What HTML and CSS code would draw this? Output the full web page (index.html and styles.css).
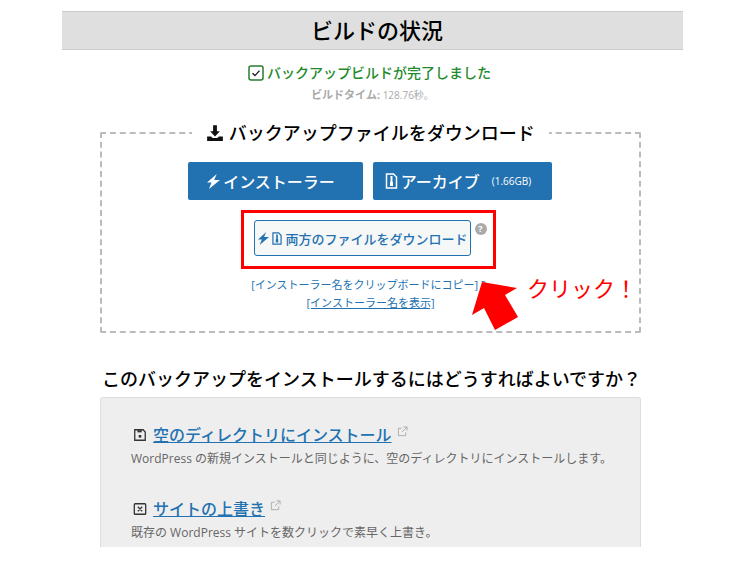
FILE: index.html
```html
<!DOCTYPE html>
<html>

<head>
  <title>ビルドの状況</title>
  <link rel="stylesheet" href="styles.css">
</head>

<body>
  <div class="page">
    <h1 class="page-title">ビルドの状況</h1>

    <div class="status">
      <svg class="status-icon" viewBox="0 0 16 16" width="16" height="16">
        <rect x="1" y="1" width="14" height="14" rx="2" fill="none" stroke="#2a7d2e" stroke-width="1.5" />
        <path d="M4.5 8.2 7 10.6 11.5 5.6" fill="none" stroke="#222" stroke-width="1.4" />
      </svg>
      <span>バックアップビルドが完了しました</span>
    </div>
    <div class="build-time"><b>ビルドタイム:</b> 128.76秒。</div>

    <fieldset class="download-box">
      <legend>
        <svg viewBox="0 0 16 16" width="18" height="18">
          <path d="M6.300 1h3.400v5.500h2.600L8 11 3.700 6.500h2.600z" fill="#111" />
          <path d="M1 11h3.500L6 12.500h4L11.500 11H15v4H1z" fill="#111" />
        </svg>
        バックアップファイルをダウンロード
      </legend>

      <div class="main-buttons">
        <a class="btn btn-installer">
          <svg class="bolt" viewBox="1 1 10 14" width="13" height="15" preserveAspectRatio="none">
            <path d="M8.500 1 1 9h3.500L2.500 15 11 6.500H6.500z" fill="#fff" />
          </svg>
          インストーラー
        </a>
        <a class="btn btn-archive">
          <svg class="zip" viewBox="0 0 12 16" width="13" height="16">
            <path d="M1 1h7l3 3v11H1z" fill="none" stroke="#fff" stroke-width="1.500" />
            <path d="M5 3h2v6H5zM4.500 9h3v4h-3z" fill="#fff" />
          </svg>
          アーカイブ <small>(1.66GB)</small>
        </a>
      </div>

      <div class="both-row">
        <a class="btn-both">
          <svg viewBox="1 1 10 14" width="11" height="13" preserveAspectRatio="none">
            <path d="M8.500 1 1 9h3.500L2.500 15 11 6.500H6.500z" fill="#2271b1" />
          </svg>
          <svg viewBox="0 0 12 16" width="10" height="13">
            <path d="M1 1h7l3 3v11H1z" fill="none" stroke="#2271b1" stroke-width="1.500" />
            <path d="M5 3h2v6H5zM4.500 9h3v4h-3z" fill="#2271b1" />
          </svg>
          両方のファイルをダウンロード
        </a>
        <span class="help">?</span>
      </div>

      <div class="links">
        <div class="copy-row"><a class="copy-link">[インストーラー名をクリップボードにコピー]</a> <span class="help-small">?</span></div>
        <div><a class="show-link">[インストーラー名を表示]</a></div>
      </div>
    </fieldset>

    <h2 class="howto-title">このバックアップをインストールするにはどうすればよいですか？</h2>

    <div class="howto">
      <div class="howto-item">
        <div class="howto-head">
          <svg viewBox="0 0 16 16" width="14" height="14">
            <path d="M2 2h9.500L14 4.500V14H2z" fill="none" stroke="#333" stroke-width="1.500" />
            <path d="M5 2.500h5V5H5z" fill="#333" />
            <rect x="6.500" y="8" width="3" height="3" fill="#333" />
          </svg>
          <a>空のディレクトリにインストール</a>
          <svg class="ext" viewBox="0 0 12 12" width="11" height="11">
            <path d="M9.500 7v3.500h-8v-8H5M7 1h4v4M11 1 5.500 6.500" fill="none" stroke="#aaa" stroke-width="1" />
          </svg>
        </div>
        <p>WordPress の新規インストールと同じように、空のディレクトリにインストールします。</p>
      </div>
      <div class="howto-item">
        <div class="howto-head">
          <svg viewBox="0 0 16 16" width="14" height="14">
            <rect x="1.500" y="2" width="13" height="12" rx="1" fill="none" stroke="#333" stroke-width="1.500" />
            <path d="M5.500 5.500l5 5M10.500 5.500l-5 5" fill="none" stroke="#333" stroke-width="1.500" />
          </svg>
          <a>サイトの上書き</a>
          <svg class="ext" viewBox="0 0 12 12" width="11" height="11">
            <path d="M9.500 7v3.500h-8v-8H5M7 1h4v4M11 1 5.500 6.500" fill="none" stroke="#aaa" stroke-width="1" />
          </svg>
        </div>
        <p>既存の WordPress サイトを数クリックで素早く上書き。</p>
      </div>
    </div>
  </div>

  <!-- annotations on top of the screenshot -->
  <div class="note-box"></div>
  <svg class="note-arrow" viewBox="0 0 50 52" width="50" height="52">
    <polygon points="12,2 47,8 35,15 48,37 25,50 14,28 2,35" fill="#f00" />
  </svg>
  <div class="note-text">クリック！</div>
</body>

</html>
```

FILE: styles.css
```css
html,
body {
  margin: 0;
  height: 563px;
  overflow: hidden;
  background-color: #fff;
}

body {
  position: relative;
  font-family: "Open Sans", "Noto Sans CJK JP", sans-serif;
  color: #000;
}

.page {
  width: 621px;
  margin-left: 62px;
  padding-top: 11px;
}

.page-title {
  margin: 0;
  height: 37px;
  padding-left: 9px;
  line-height: 37px;
  background-color: #dfdfdf;
  border-top: 1px solid #ccc;
  border-bottom: 1px solid #ccc;
  font-size: 22px;
  font-weight: 500;
  text-align: center;
}

.status {
  display: flex;
  justify-content: center;
  align-items: center;
  gap: 3px;
  margin-top: 13px;
  padding-right: 6px;
  color: #1f8a2b;
  font-size: 14px;
  font-weight: 500;
  line-height: 20px;
}

.build-time {
  margin-top: 5px;
  color: #aaa;
  font-size: 10px;
  line-height: 14px;
  text-align: center;
}

.build-time b {
  font-size: 11px;
}

/* Download box */
.download-box {
  box-sizing: border-box;
  width: 541px;
  height: 212px;
  margin: 19px 0 0 38px;
  padding: 0;
  border: 2px dashed #bbb;
  border-radius: 2px;
}

.download-box legend {
  margin: 0 auto;
  padding: 0 14px;
  font-size: 18px;
  font-weight: 500;
  line-height: 24px;
}

.download-box legend svg {
  vertical-align: -2px;
}

.main-buttons {
  display: flex;
  justify-content: center;
  gap: 10px;
  margin-top: 17px;
  padding-right: 2px;
}

.btn {
  display: flex;
  justify-content: center;
  align-items: center;
  gap: 3px;
  height: 38px;
  box-sizing: border-box;
  padding-right: 8px;
  background-color: #2271b1;
  border-radius: 2px;
  color: #fff;
  font-size: 16px;
  font-weight: 500;
}

.btn-installer {
  width: 175px;
}

.btn-archive {
  width: 179px;
}

.btn small {
  margin-left: 9px;
  font-size: 10px;
  font-weight: 400;
}

.both-row {
  display: flex;
  justify-content: center;
  margin-top: 20px;
}

.btn-both {
  display: flex;
  align-items: center;
  gap: 3px;
  height: 36px;
  box-sizing: border-box;
  padding: 0 2px 0 3px;
  background-color: #f6f7f7;
  border: 1px solid #2271b1;
  border-radius: 3px;
  color: #2271b1;
  font-size: 13px;
  font-weight: 500;
}

.help {
  width: 12px;
  height: 12px;
  margin: 3px 0 0 4px;
  border-radius: 50%;
  background-color: #aaa;
  color: #fff;
  font-size: 9px;
  font-weight: 700;
  line-height: 12px;
  text-align: center;
}

.links {
  margin-top: 20px;
  font-size: 11px;
  line-height: 18px;
  text-align: center;
}

.copy-row {
  padding-right: 4px;
}

.copy-link {
  color: #2271b1;
}

.show-link {
  color: #2271b1;
  text-decoration: underline;
}

.help-small {
  color: #2271b1;
}

/* How to install */
.howto-title {
  margin: 33px 0 0 40px;
  font-size: 18px;
  font-weight: 500;
  line-height: 26px;
}

.howto {
  box-sizing: border-box;
  width: 541px;
  height: 150px;
  margin: 5px 0 0 38px;
  padding: 25px 30px 0;
  background-color: #eee;
  border: 1px solid #ddd;
  border-bottom: none;
  border-radius: 3px 3px 0 0;
}

.howto-item {
  margin-bottom: 29px;
}

.howto-head {
  display: flex;
  align-items: center;
  gap: 6px;
  padding-left: 2px;
}

.howto-head a {
  color: #2271b1;
  font-size: 16px;
  font-weight: 500;
  line-height: 24px;
  text-decoration: underline;
}

.howto-head .ext {
  margin: -8px 0 0 -1px;
}

.howto-item p {
  margin: 3px 0 0;
  color: #666;
  font-size: 12px;
  line-height: 18px;
  white-space: nowrap;
}

/* Annotations */
.note-box {
  position: absolute;
  left: 241px;
  top: 210px;
  width: 249px;
  height: 53px;
  border: 3px solid #f00;
}

.note-arrow {
  position: absolute;
  left: 470px;
  top: 280px;
}

.note-text {
  position: absolute;
  left: 527px;
  top: 272px;
  color: #f00;
  font-size: 22px;
  font-weight: 400;
  line-height: 32px;
}
```
